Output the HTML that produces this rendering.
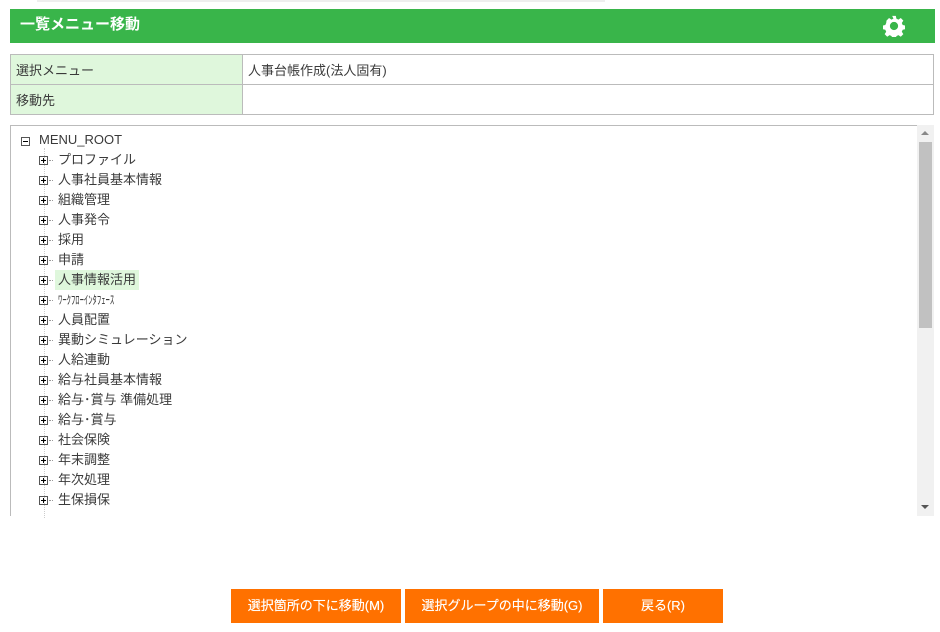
<!DOCTYPE html>
<html><head><meta charset="utf-8"><style>
*{margin:0;padding:0;box-sizing:border-box}
body{width:940px;height:632px;background:#fff;font-family:"Liberation Sans","Noto Sans CJK JP",sans-serif;color:#3a3a3a;position:relative;overflow:hidden}
.top{position:absolute;left:37px;top:0;width:568px;height:2px;background:#eee}
.hdr{position:absolute;left:10px;top:9px;width:925px;height:34px;background:#39b54a;color:#fff;font-weight:bold;font-size:15px;line-height:32px;padding-left:10px}
.gear{position:absolute;right:30px;top:6px}
table{position:absolute;left:10px;top:54px;width:924px;border-collapse:collapse;font-size:13px}
td{border:1px solid #bbb;height:30px;padding:0 5px;vertical-align:middle}
td.l{background:#dff7dc;width:232px}
.tree{position:absolute;left:10px;top:125px;width:908px;height:391px;border:1px solid #bbb;border-bottom:none;font-size:13px}
.sb{position:absolute;left:917px;top:125px;width:17px;height:391px;background:#f1f1f1}
.thumb{position:absolute;left:2px;top:17px;width:13px;height:186px;background:#c1c1c1}
.it{position:absolute;height:20px;line-height:20px;white-space:nowrap}
.ic{position:absolute;width:9px;height:9px;border:1px solid #555;font-size:0}
.ic:before{content:"";position:absolute;left:1px;top:3px;width:5px;height:1px;background:#000}
.ic.p:after{content:"";position:absolute;left:3px;top:1px;width:1px;height:5px;background:#000}
.dash{position:absolute;width:4px;border-top:1px dotted #999}
.vl{position:absolute;left:33px;top:22px;height:370px;border-left:1px dotted #ccc}
.btn{position:absolute;top:589px;height:34px;background:#ff7100;color:#fff;font-size:13px;text-align:center;line-height:34px;text-shadow:0 0 0.4px #fff}
</style></head><body>
<div class="top"></div>
<div class="hdr">一覧メニュー移動
<svg class="gear" width="22" height="22" viewBox="0 0 24 24"><path fill="#fff" d="M10 1h4l.6 3 2.2 1 2.6-1.7 2.8 2.8-1.7 2.6 1 2.2 3 .6v4l-3 .6-1 2.2 1.7 2.6-2.8 2.8-2.6-1.7-2.2 1-.6 3h-4l-.6-3-2.2-1-2.6 1.7-2.8-2.8 1.7-2.6-1-2.2-3-.6v-4l3-.6 1-2.2L3.8 6.1l2.8-2.8 2.6 1.7 2.2-1zM12 7.5a4.5 4.5 0 1 0 0 9 4.5 4.5 0 0 0 0-9z"/></svg>
</div>
<table><tr><td class="l">選択メニュー</td><td>人事台帳作成(法人固有)</td></tr><tr><td class="l">移動先</td><td></td></tr></table>
<div class="tree">
<div class="vl"></div>
<div class="ic" style="left:10px;top:11px"></div>
<div class="it" style="left:28px;top:4px">MENU_ROOT</div>
<div id="items"></div>
</div>
<div class="sb"><div style="position:absolute;left:4px;top:6px;border:4px solid transparent;border-bottom:4px solid #888;border-top:0;width:0"></div><div class="thumb"></div><div style="position:absolute;left:4px;top:380px;border:4px solid transparent;border-top:4px solid #555;border-bottom:0;width:0"></div></div>
<script>
var a=["プロファイル","人事社員基本情報","組織管理","人事発令","採用","申請","人事情報活用","<span style='font-size:12px;display:inline-block;transform:scaleX(0.72);transform-origin:left'>ﾜｰｸﾌﾛｰｲﾝﾀﾌｪｰｽ</span>","人員配置","異動シミュレーション","人給連動","給与社員基本情報","給与･賞与 準備処理","給与･賞与","社会保険","年末調整","年次処理","生保損保"];
var h="";a.forEach(function(t,i){var y=24+i*20;
h+='<div class="ic p" style="left:28px;top:'+(y+6)+'px"></div><div class="dash" style="left:38px;top:'+(y+10)+'px"></div>';
h+='<div class="it" style="left:44px;top:'+y+'px;padding:0 3px;'+(i==6?'background:#dff7dc;':'')+'">'+t+'</div>';});
document.getElementById("items").innerHTML=h;
</script>
<div class="btn" style="left:231px;width:170px">選択箇所の下に移動(M)</div>
<div class="btn" style="left:405px;width:194px">選択グループの中に移動(G)</div>
<div class="btn" style="left:603px;width:120px">戻る(R)</div>
</body></html>
